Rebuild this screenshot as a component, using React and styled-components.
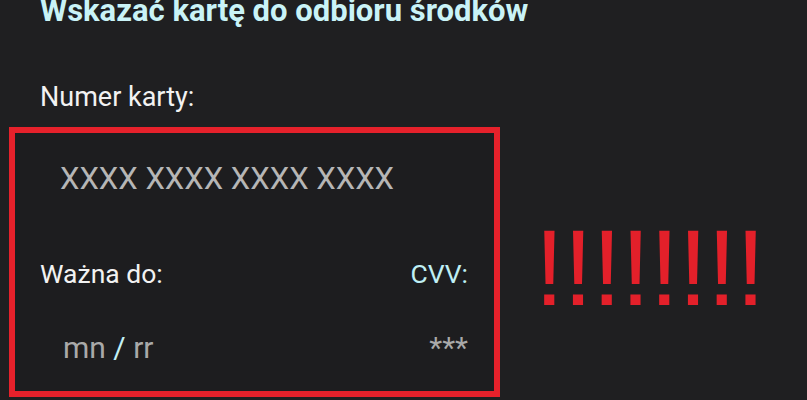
import styled, { createGlobalStyle } from 'styled-components';

const GlobalStyle = createGlobalStyle`
  html, body {
    margin: 0;
    padding: 0;
    background: #1f1f21;
    overflow: hidden;
  }
  body {
    font-family: Roboto, "Noto Sans", sans-serif;
  }
`;

export default function App() {
  return (
    <Page>
      <GlobalStyle />
      <TitleRow>
        <Title>Wskazać kartę do odbioru środków</Title>
      </TitleRow>
      <FieldLabel>Numer karty:</FieldLabel>
      <FormRow>
        <Highlight>
          <NumberField>XXXX XXXX XXXX XXXX</NumberField>
          <LabelRow>
            <Label>Ważna do:</Label>
            <Label $accent>CVV:</Label>
          </LabelRow>
          <ValueRow>
            <Placeholder>
              mn <Slash>/</Slash> rr
            </Placeholder>
            <Placeholder>***</Placeholder>
          </ValueRow>
        </Highlight>
        <Warning>!!!!!!!!</Warning>
      </FormRow>
    </Page>
  );
}

const Page = styled.div`
  width: 807px;
  height: 400px;
  background: #1f1f21;
  display: flex;
  flex-direction: column;
`;

const TitleRow = styled.div`
  padding-left: 40px;
  height: 26px;
`;

const Title = styled.h1`
  margin: -5px 0 0;
  font-size: 31px;
  line-height: 31px;
  font-weight: 700;
  color: #c9f3f7;
  white-space: nowrap;
`;

const FieldLabel = styled.div`
  padding-left: 40px;
  margin-top: 58px;
  font-size: 27px;
  line-height: 27px;
  color: #f2f2f2;
`;

const FormRow = styled.div`
  display: flex;
  align-items: stretch;
  margin-top: 16px;
`;

const Highlight = styled.section`
  box-sizing: border-box;
  width: 491px;
  height: 270px;
  margin-left: 9px;
  border: 6px solid #e6212b;
  background: #1d1d1f;
  display: flex;
  flex-direction: column;
`;

const NumberField = styled.div`
  box-sizing: border-box;
  height: 92px;
  padding: 31px 0 0 45px;
  font-size: 31px;
  line-height: 30px;
  color: #b6b6b6;
  white-space: nowrap;
`;

const LabelRow = styled.div`
  display: flex;
  justify-content: space-between;
  padding: 0 26px 0 25px;
  margin-top: 36px;
`;

const Label = styled.span`
  font-size: 26.5px;
  line-height: 26px;
  color: ${(p) => (p.$accent ? '#bfeff4' : '#f2f2f2')};
`;

const ValueRow = styled.div`
  display: flex;
  justify-content: space-between;
  padding: 0 26px 0 48px;
  margin-top: 45px;
`;

const Placeholder = styled.span`
  font-size: 30px;
  line-height: 31px;
  color: #a9a9a9;
  white-space: pre;
`;

const Slash = styled.span`
  color: #c3f0f5;
`;

const Warning = styled.div`
  flex: 1;
  display: flex;
  align-items: center;
  justify-content: center;
  padding-top: 12px;
  padding-right: 8px;
  font-family: "Liberation Sans", Arial, sans-serif;
  font-size: 107px;
  line-height: 1;
  color: #e3202a;
  letter-spacing: -1px;
`;
